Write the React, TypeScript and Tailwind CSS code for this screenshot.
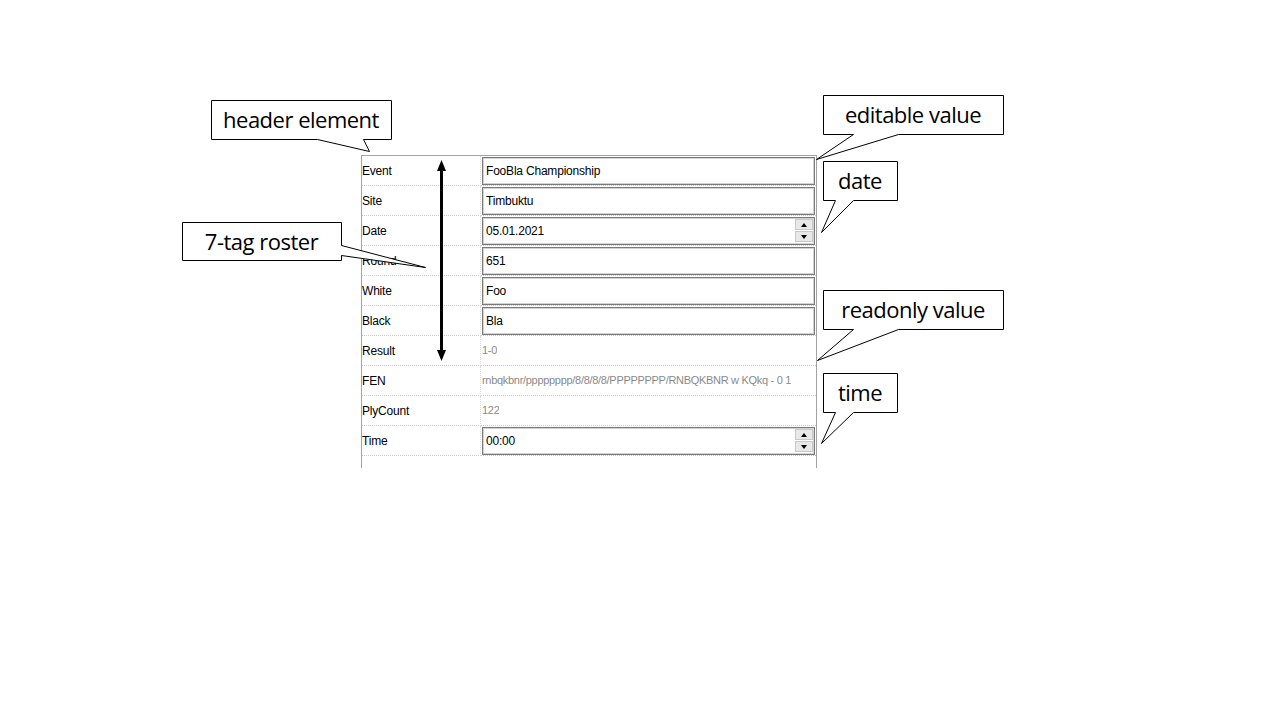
import type { ReactNode } from "react";

type Kind = "edit" | "readonly" | "spin";

interface Row {
  tag: string;
  value: string;
  kind: Kind;
}

const rows: Row[] = [
  { tag: "Event", value: "FooBla Championship", kind: "edit" },
  { tag: "Site", value: "Timbuktu", kind: "edit" },
  { tag: "Date", value: "05.01.2021", kind: "spin" },
  { tag: "Round", value: "651", kind: "edit" },
  { tag: "White", value: "Foo", kind: "edit" },
  { tag: "Black", value: "Bla", kind: "edit" },
  { tag: "Result", value: "1-0", kind: "readonly" },
  { tag: "FEN", value: "rnbqkbnr/pppppppp/8/8/8/8/PPPPPPPP/RNBQKBNR w KQkq - 0 1", kind: "readonly" },
  { tag: "PlyCount", value: "122", kind: "readonly" },
  { tag: "Time", value: "00:00", kind: "spin" },
];

interface Callout {
  label: string;
  box: [number, number, number, number]; // left, top, right, bottom
  points: string;
}

// Sprechblasen: Rechteck + Spitze als ein Polygon
const callouts: Callout[] = [
  {
    label: "header element",
    box: [211, 100, 391, 139],
    points: "211.5,100.5 391.5,100.5 391.5,139.5 363.5,139.5 369.5,151.5 317.5,139.5 211.5,139.5",
  },
  {
    label: "editable value",
    box: [823, 95, 1003, 134],
    points: "823.5,95.5 1003.5,95.5 1003.5,134.5 898.5,134.5 816.5,159.5 853.5,134.5 823.5,134.5",
  },
  {
    label: "date",
    box: [823, 161, 897, 200],
    points: "823.5,161.5 897.5,161.5 897.5,200.5 853.5,200.5 821.5,232.5 835.5,200.5 823.5,200.5",
  },
  {
    label: "7-tag roster",
    box: [182, 222, 341, 260],
    points: "182.5,222.5 341.5,222.5 341.5,245.5 425.5,267.5 341.5,255.5 341.5,260.5 182.5,260.5",
  },
  {
    label: "readonly value",
    box: [823, 290, 1003, 329],
    points: "823.5,290.5 1003.5,290.5 1003.5,329.5 898.5,329.5 817.5,360.5 853.5,329.5 823.5,329.5",
  },
  {
    label: "time",
    box: [823, 373, 897, 412],
    points: "823.5,373.5 897.5,373.5 897.5,412.5 853.5,412.5 821.5,443.5 835.5,412.5 823.5,412.5",
  },
];

function SpinButtons() {
  return (
    <div className="flex w-[18px] flex-col gap-px">
      <div className="flex h-[11px] items-center justify-center border border-[#c9c9c9] bg-[#e8e8e8]">
        <svg width="6" height="4" viewBox="0 0 6 4">
          <path d="M3 0 L6 4 L0 4 Z" fill="#000" />
        </svg>
      </div>
      <div className="flex h-[11px] items-center justify-center border border-[#c9c9c9] bg-[#e8e8e8]">
        <svg width="6" height="4" viewBox="0 0 6 4">
          <path d="M0 0 L6 0 L3 4 Z" fill="#000" />
        </svg>
      </div>
    </div>
  );
}

function ValueCell({ row }: { row: Row }): ReactNode {
  if (row.kind === "readonly") {
    return (
      <span className="overflow-hidden whitespace-nowrap pl-px text-[11px] tracking-[-0.3px] text-[#8a8a8a]">
        {row.value}
      </span>
    );
  }
  return (
    <div className="m-px flex h-[28px] flex-1 items-center border border-[#7a7a7a] pl-[3px] pr-[1px] shadow-[inset_0_0_0_1px_#d4d4d4]">
      <span className="flex-1 text-black">{row.value}</span>
      {row.kind === "spin" && <SpinButtons />}
    </div>
  );
}

export default function App() {
  return (
    <div className="relative h-[720px] w-[1280px] bg-white font-['Liberation_Sans',Arial,sans-serif]">
      {/* Tag-Tabelle */}
      <div className="pl-[361px] pt-[155px]">
        <div className="h-[313px] w-[456px] border-x border-t border-[#a3a3a3] text-[12px] tracking-[-0.2px]">
          {rows.map((row) => (
            <div key={row.tag} className="flex h-[30px]">
              <div className="flex w-[119px] shrink-0 items-center border-r border-b border-dotted border-r-[#dcdcdc] border-b-[#c8c8c8] text-black">
                {row.tag}
              </div>
              <div className="flex min-w-0 flex-1 items-center overflow-hidden border-b border-dotted border-[#c8c8c8]">
                <ValueCell row={row} />
              </div>
            </div>
          ))}
        </div>
      </div>

      {/* Annotationen */}
      <svg className="pointer-events-none absolute inset-0" width="1280" height="720">
        <line x1="441.5" y1="170" x2="441.5" y2="351" stroke="#000" strokeWidth="3" />
        <path d="M441.5 160 L446 171 L437 171 Z" fill="#000" />
        <path d="M441.5 361 L446 350 L437 350 Z" fill="#000" />
        {callouts.map((c) => (
          <polygon key={c.label} points={c.points} fill="#fff" stroke="#000" strokeWidth="1" />
        ))}
      </svg>

      {callouts.map((c) => (
        <div
          key={c.label}
          className="absolute flex items-center justify-center font-['Open_Sans',sans-serif] text-[22px] tracking-[-0.5px] text-black"
          style={{ left: c.box[0], top: c.box[1], width: c.box[2] - c.box[0], height: c.box[3] - c.box[1] }}
        >
          {c.label}
        </div>
      ))}
    </div>
  );
}
